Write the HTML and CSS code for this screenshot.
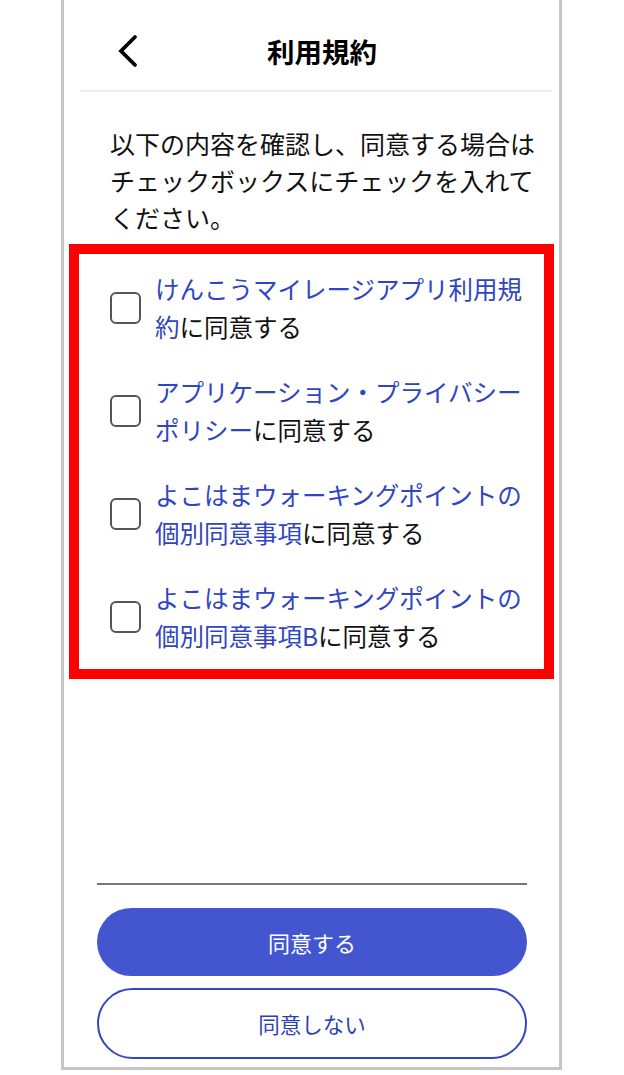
FILE: index.html
```html
<!DOCTYPE html>
<html lang="ja">
<head>
<meta charset="utf-8">
<title>利用規約</title>
<link rel="stylesheet" href="styles.css">
</head>
<body>
<div class="frame">
  <header class="header">
    <div class="back">
      <svg width="20" height="34" viewBox="0 0 20 34"><polyline points="17,3 3,17 17,31" fill="none" stroke="#000" stroke-width="3.8" stroke-linecap="round" stroke-linejoin="miter"/></svg>
    </div>
    <h1 class="title">利用規約</h1>
    <div class="spacer"></div>
  </header>
  <p class="intro">以下の内容を確認し、同意する場合はチェックボックスにチェックを入れてください。</p>
  <div class="agree-box">
    <div class="item"><span class="check"></span><p class="label"><span class="link">けんこうマイレージアプリ利用規約</span>に同意する</p></div>
    <div class="item"><span class="check"></span><p class="label"><span class="link">アプリケーション・プライバシーポリシー</span>に同意する</p></div>
    <div class="item"><span class="check"></span><p class="label"><span class="link">よこはまウォーキングポイントの個別同意事項</span>に同意する</p></div>
    <div class="item"><span class="check"></span><p class="label"><span class="link">よこはまウォーキングポイントの個別同意事項B</span>に同意する</p></div>
  </div>
  <footer class="footer">
    <div class="rule"></div>
    <button class="btn btn-primary">同意する</button>
    <button class="btn btn-outline">同意しない</button>
  </footer>
</div>
</body>
</html>
```
FILE: styles.css
```css
html, body {
  margin: 0;
  padding: 0;
  background: #fff;
}
body {
  font-family: "Noto Sans CJK JP", "Noto Sans", sans-serif;
  color: #111;
  width: 624px;
}
.frame {
  box-sizing: border-box;
  margin-left: 61px;
  width: 501px;
  height: 1070px;
  border-left: 3px solid #c6c6c6;
  border-right: 3px solid #c6c6c6;
  border-bottom: 3px solid #c6c6c6;
  display: flex;
  flex-direction: column;
}
.header {
  box-sizing: content-box;
  height: 78px;
  padding-top: 12px;
  margin: 0 7px 0 16px;
  border-bottom: 2px solid #efefef;
  display: grid;
  grid-template-columns: 1fr auto 1fr;
  align-items: center;
}
.back {
  padding-left: 38px;
  display: flex;
  align-items: center;
}
.back svg { display: block; }
.title {
  margin: 0;
  padding-left: 12px;
  font-size: 27.5px;
  font-weight: 700;
  line-height: 36px;
  color: #000;
}
.intro {
  margin: 33px 7px 0 46px;
  font-size: 25px;
  line-height: 37px;
  color: #111;
}
.agree-box {
  margin: 8px 0 0 5px;
  width: 485px;
  box-sizing: border-box;
  border: 10px solid #ff0000;
  padding: 16px 0 14px 31px;
  display: flex;
  flex-direction: column;
  gap: 27px;
}
.item {
  display: flex;
  align-items: center;
  gap: 14px;
}
.check {
  flex: none;
  box-sizing: border-box;
  width: 31px;
  height: 32px;
  border: 2px solid #555;
  border-radius: 6px;
  background: #fff;
}
.label {
  margin: 0;
  width: 380px;
  font-size: 24.5px;
  line-height: 38px;
  color: #111;
}
.link {
  color: #2f45c2;
}
.footer {
  margin-top: auto;
  padding: 0 32px 8px 33px;
  display: flex;
  flex-direction: column;
}
.rule {
  height: 2px;
  background: #777;
  margin-bottom: 23px;
}
.btn {
  font-family: "Noto Sans CJK JP", "Noto Sans", sans-serif;
  box-sizing: border-box;
  width: 100%;
  border-radius: 36px;
  font-size: 22px;
  cursor: pointer;
}
.btn-primary {
  height: 68px;
  background: #4356cf;
  color: #fff;
  border: none;
  margin-bottom: 12px;
}
.btn-outline {
  height: 71px;
  background: #fff;
  color: #2d3fb6;
  border: 2px solid #3446c0;
  font-size: 21.5px;
}
```
